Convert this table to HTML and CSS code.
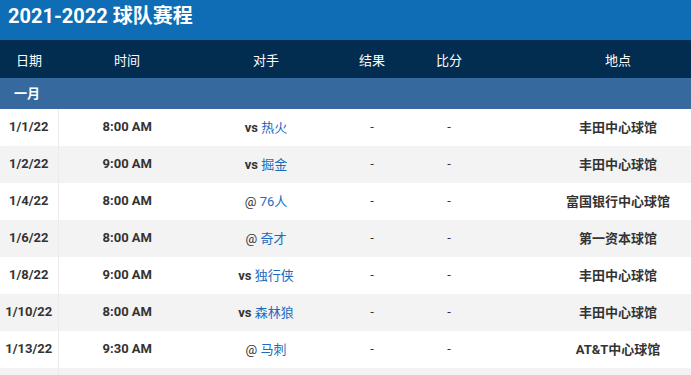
FILE: index.html
```html
<!DOCTYPE html>
<html lang="zh">
<head>
<meta charset="utf-8">
<link rel="stylesheet" href="styles.css">
</head>
<body>
<div class="page">
  <h1 class="title">2021-2022 球队赛程</h1>
  <div class="scroller">
    <table class="schedule">
      <colgroup>
        <col class="c-date"><col class="c-time"><col class="c-opp"><col class="c-res"><col class="c-score"><col class="c-loc">
      </colgroup>
      <thead>
        <tr class="head">
          <th class="date">日期</th><th>时间</th><th>对手</th><th>结果</th><th>比分</th><th>地点</th>
        </tr>
      </thead>
      <tbody>
        <tr class="month"><td colspan="6">一月</td></tr>
        <tr><td class="date">1/1/22</td><td class="time">8:00 AM</td><td class="opp"><b>vs</b> <a>热火</a></td><td>-</td><td>-</td><td class="loc">丰田中心球馆</td></tr>
        <tr class="alt"><td class="date">1/2/22</td><td class="time">9:00 AM</td><td class="opp"><b>vs</b> <a>掘金</a></td><td>-</td><td>-</td><td class="loc">丰田中心球馆</td></tr>
        <tr><td class="date">1/4/22</td><td class="time">8:00 AM</td><td class="opp"><span>@</span> <a>76人</a></td><td>-</td><td>-</td><td class="loc">富国银行中心球馆</td></tr>
        <tr class="alt"><td class="date">1/6/22</td><td class="time">8:00 AM</td><td class="opp"><span>@</span> <a>奇才</a></td><td>-</td><td>-</td><td class="loc">第一资本球馆</td></tr>
        <tr><td class="date">1/8/22</td><td class="time">9:00 AM</td><td class="opp"><b>vs</b> <a>独行侠</a></td><td>-</td><td>-</td><td class="loc">丰田中心球馆</td></tr>
        <tr class="alt"><td class="date">1/10/22</td><td class="time">8:00 AM</td><td class="opp"><b>vs</b> <a>森林狼</a></td><td>-</td><td>-</td><td class="loc">丰田中心球馆</td></tr>
        <tr><td class="date">1/13/22</td><td class="time">9:30 AM</td><td class="opp"><span>@</span> <a>马刺</a></td><td>-</td><td>-</td><td class="loc">AT&amp;T中心球馆</td></tr>
        <tr class="alt"><td class="date"></td><td></td><td></td><td></td><td></td><td></td></tr>
      </tbody>
    </table>
  </div>
</div>
</body>
</html>
```

FILE: styles.css
```css
html, body {
  margin: 0;
  padding: 0;
  background: #ffffff;
  overflow: hidden;
}
body {
  font-family: Roboto, "Noto Sans CJK SC", sans-serif;
  color: #333333;
}
.page {
  width: 691px;
  height: 375px;
  overflow: hidden;
}
.title {
  margin: 0;
  height: 40px;
  box-sizing: border-box;
  padding: 3px 0 0 8px;
  background: #0e6db5;
  color: #ffffff;
  font-size: 20px;
  font-weight: 700;
  line-height: 26px;
}
.scroller {
  width: 691px;
  overflow: hidden;
}
.schedule {
  border-collapse: collapse;
  table-layout: fixed;
  width: 746px;
  font-size: 13px;
}
.c-date { width: 58px; }
.c-time { width: 138px; }
.c-opp { width: 140px; }
.c-res { width: 72px; }
.c-score { width: 82px; }
.c-loc { width: 256px; }

.head th {
  height: 38px;
  padding: 0;
  background: #022d50;
  color: #ffffff;
  font-weight: 400;
  font-size: 13px;
  text-align: center;
}
.month td {
  height: 31px;
  padding: 0 0 2px 14px;
  box-sizing: border-box;
  background: #366a9e;
  color: #ffffff;
  font-weight: 700;
  font-size: 13px;
  text-align: left;
}
tbody tr td {
  height: 37px;
  box-sizing: border-box;
  padding: 0 0 2px 0;
  text-align: center;
  vertical-align: middle;
  background: #ffffff;
}
tbody tr.alt td {
  background: #f3f3f3;
}
td.date {
  font-weight: 700;
  box-shadow: 2px 0 2px -1px rgba(0, 0, 0, 0.1);
  border-right: 1px solid #ebebeb;
}
td.time {
  font-weight: 700;
}
td.opp b {
  font-weight: 700;
}
td.opp span {
  font-weight: 400;
}
td.opp a {
  color: #1b6cc0;
  font-weight: 400;
}
td.loc {
  font-weight: 700;
}
```
